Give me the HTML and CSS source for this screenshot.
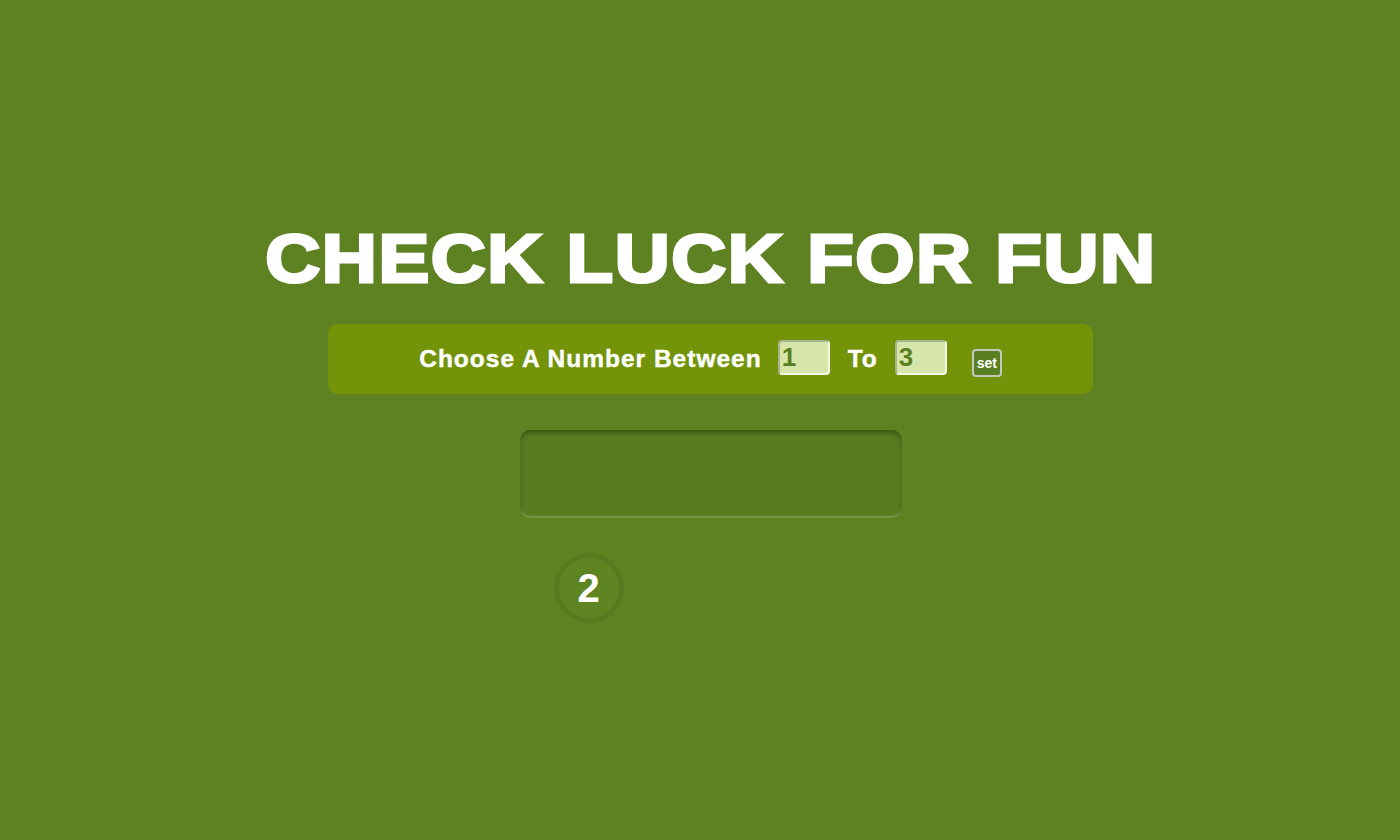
FILE: index.html
```html
<!DOCTYPE html>
<html>
<head>
<meta charset="utf-8">
<link rel="stylesheet" href="styles.css">
</head>
<body>
<main class="page">
  <h1 class="title">CHECK LUCK FOR FUN</h1>
  <div class="range-panel">
    <span class="label">Choose A Number Between</span>
    <input class="num" type="text" value="1">
    <span class="label to">To</span>
    <input class="num" type="text" value="3">
    <button class="set-btn">set</button>
  </div>
  <div class="result-box"></div>
  <div class="history">
    <div class="ball">2</div>
  </div>
</main>
</body>
</html>
```

FILE: styles.css
```css
html, body {
  margin: 0;
  padding: 0;
  background: #5e8222;
  font-family: "Liberation Sans", Arial, sans-serif;
}
.page {
  display: flex;
  flex-direction: column;
  align-items: center;
  padding-left: 21px;
  padding-top: 219px;
  height: 840px;
  box-sizing: border-box;
}
.title {
  margin: 0 -1px 0 0;
  font-size: 68px;
  line-height: 79px;
  font-weight: 700;
  color: #fff;
  -webkit-text-stroke: 3px #fff;
  letter-spacing: 1.4px;
  transform: scaleX(1.12);
}
.range-panel {
  margin-top: 26px;
  width: 765px;
  height: 70px;
  background: #739408;
  border-radius: 10px;
  display: flex;
  align-items: center;
  justify-content: center;
  box-sizing: border-box;
}
.label {
  color: #fff;
  font-weight: 700;
  font-size: 24.5px;
  letter-spacing: 1px;
  -webkit-text-stroke: 0.4px #fff;
}
.to {
  margin: 0 17px 0 18px;
}
.num {
  width: 52px;
  height: 35px;
  box-sizing: border-box;
  margin-left: 16px;
  margin-bottom: 4px;
  padding: 0 2px;
  background: #d6e6aa;
  border: 2px solid #f2f6e6;
  border-top-color: #a8b48c;
  border-left-color: #a8b48c;
  border-radius: 4px;
  font-family: "Liberation Sans", Arial, sans-serif;
  font-weight: 700;
  font-size: 26px;
  color: #5a7f20;
  outline: none;
}
.range-panel .to + .num { margin-left: 0; }
.set-btn {
  margin-left: 25px;
  margin-top: 8px;
  width: 30px;
  height: 28px;
  padding: 0;
  background: #5a7f22;
  border: 2px solid #c4c8bc;
  border-radius: 4px;
  color: #fff;
  font-family: "Liberation Sans", Arial, sans-serif;
  font-weight: 700;
  font-size: 14px;
}
.result-box {
  margin-top: 36px;
  width: 382px;
  height: 88px;
  background: #597c22;
  border-radius: 10px;
  box-shadow: inset 0 3px 4px rgba(40, 60, 10, 0.6), inset 0 -2px 2px rgba(160, 190, 120, 0.5);
}
.history {
  margin-top: 35px;
  width: 382px;
  padding-left: 34px;
  box-sizing: border-box;
  display: flex;
}
.ball {
  width: 70px;
  height: 70px;
  box-sizing: border-box;
  border-radius: 50%;
  border: 5px solid #567a1e;
  background: #5f8523;
  color: #fff;
  font-weight: 700;
  font-size: 40px;
  display: flex;
  align-items: center;
  justify-content: center;
}
```
